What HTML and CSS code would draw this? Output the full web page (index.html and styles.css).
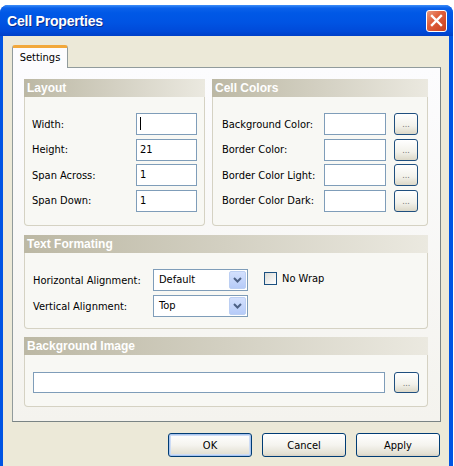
FILE: index.html
```html
<!DOCTYPE html>
<html lang="en">
<head>
  <meta charset="UTF-8" />
  <title>Cell Properties</title>
  <link rel="stylesheet" href="styles.css">
</head>
<body>

  <div class="window">
    <div class="titlebar">
      <span class="title">Cell Properties</span>
      <span class="close">
        <svg width="13" height="13" viewBox="0 0 13 13">
          <path d="M2 2 L11 11 M11 2 L2 11" stroke="#fff" stroke-width="2.4" stroke-linecap="square" fill="none"/>
        </svg>
      </span>
    </div>

    <div class="client">
      <div class="tabs">
        <div class="tab">Settings</div>
      </div>

      <div class="panel">
        <div class="top-row">

          <!-- Layout -->
          <section class="group">
            <div class="group-head">Layout</div>
            <div class="group-body layout">
              <div class="row"><span class="lbl">Width:</span><div class="field"><span class="caret"></span></div></div>
              <div class="row"><span class="lbl">Height:</span><div class="field">21</div></div>
              <div class="row"><span class="lbl">Span Across:</span><div class="field">1</div></div>
              <div class="row"><span class="lbl">Span Down:</span><div class="field">1</div></div>
            </div>
          </section>

          <!-- Cell Colors -->
          <section class="group">
            <div class="group-head">Cell Colors</div>
            <div class="group-body colors">
              <div class="row"><span class="lbl">Background Color:</span><div class="field"></div><button class="dots">...</button></div>
              <div class="row"><span class="lbl">Border Color:</span><div class="field"></div><button class="dots">...</button></div>
              <div class="row"><span class="lbl">Border Color Light:</span><div class="field"></div><button class="dots">...</button></div>
              <div class="row"><span class="lbl">Border Color Dark:</span><div class="field"></div><button class="dots">...</button></div>
            </div>
          </section>
        </div>

        <!-- Text Formating -->
        <section class="group spaced">
          <div class="group-head">Text Formating</div>
          <div class="group-body formatting">
            <div class="row">
              <span class="lbl">Horizontal Alignment:</span>
              <div class="select"><span>Default</span><span class="arrow"><svg width="9" height="6" viewBox="0 0 9 6"><path d="M1 1 L4.5 4.5 L8 1" stroke="#4d6185" stroke-width="2" fill="none"/></svg></span></div>
              <label class="check"><span class="box"></span>No Wrap</label>
            </div>
            <div class="row">
              <span class="lbl">Vertical Alignment:</span>
              <div class="select"><span>Top</span><span class="arrow"><svg width="9" height="6" viewBox="0 0 9 6"><path d="M1 1 L4.5 4.5 L8 1" stroke="#4d6185" stroke-width="2" fill="none"/></svg></span></div>
            </div>
          </div>
        </section>

        <!-- Background Image -->
        <section class="group">
          <div class="group-head">Background Image</div>
          <div class="group-body image">
            <div class="row"><div class="field wide"></div><button class="dots">...</button></div>
          </div>
        </section>
      </div>

      <div class="footer">
        <button class="btn default">OK</button>
        <button class="btn">Cancel</button>
        <button class="btn">Apply</button>
      </div>
    </div>
  </div>

</body>
</html>
```

FILE: styles.css
```css
:root {
  --face: #ece9d8;
  --blue: #0054e3;
  --field: #7f9db9;
  --text: #000;
}

body {
  margin: 0;
  background: #fff;
  font-family: "DejaVu Sans Condensed", "DejaVu Sans", sans-serif;
  font-stretch: condensed;
  font-size: 11px;
  color: var(--text);
}

.window {
  margin-top: 5px;
  width: 453px;
  height: 461px;
  background: var(--blue);
  border-radius: 8px 8px 0 0;
  overflow: hidden;
  display: flex;
  flex-direction: column;
}

/* Title bar */
.titlebar {
  height: 31px;
  flex: none;
  display: flex;
  align-items: center;
  justify-content: space-between;
  padding: 0 6px 0 7px;
  background: linear-gradient(#3d8ef8 0, #0b61ea 3px, #0058e6 8px, #0054e3 55%, #004ad9 85%, #0040c8 100%);
}

.title {
  font-family: "Liberation Sans", sans-serif;
  font-weight: bold;
  font-size: 14px;
  letter-spacing: -0.2px;
  color: #fff;
  text-shadow: 1px 1px 0 #0a2b8c;
}

.close {
  width: 21px;
  height: 22px;
  box-sizing: border-box;
  border: 1px solid #fff;
  border-radius: 3px;
  background: linear-gradient(135deg, #eb9c7f 0%, #e0603c 40%, #c8401f 100%);
  display: flex;
  align-items: center;
  justify-content: center;
}

/* Client area */
.client {
  flex: 1;
  margin: 0 4px 0 3px;
  background: var(--face);
  padding: 9px 8px 0 9px;
}

.tabs {
  display: flex;
  height: 22px;
}

.tab {
  width: 56px;
  box-sizing: border-box;
  height: 23px;
  border: 1px solid #919b9c;
  border-top: 3px solid #f2a83a;
  border-bottom: none;
  border-radius: 3px 3px 0 0;
  background: #fcfcfe;
  text-align: center;
  line-height: 19px;
  position: relative;
  z-index: 1;
}

.panel {
  height: 355px;
  box-sizing: border-box;
  border: 1px solid #919b9c;
  border-right-color: #7a8485;
  border-bottom-color: #7a8485;
  background: linear-gradient(#fcfcfe, #f4f3ee);
  padding: 11px 12px 0 11px;
}

.top-row {
  display: grid;
  grid-template-columns: 181px 216px;
  gap: 7px;
  margin-bottom: 9px;
}

.group.spaced {
  margin-bottom: 8px;
}

.group-head {
  height: 18px;
  line-height: 18px;
  padding-left: 3px;
  font-family: "Liberation Sans", sans-serif;
  font-weight: bold;
  font-size: 12px;
  color: #fff;
  background: linear-gradient(to right, #bcb8a4, #d3d0c2 50%, #ebe9e0);
}

.group-body {
  border: 1px solid #d5d2c3;
  border-top: none;
  border-radius: 0 0 4px 4px;
  background: #f8f8f4;
  display: flex;
  flex-direction: column;
}

.row {
  display: flex;
  align-items: center;
}

.field {
  height: 22px;
  box-sizing: border-box;
  border: 1px solid var(--field);
  background: #fff;
  padding-left: 3px;
  line-height: 20px;
}

.caret {
  display: inline-block;
  width: 1px;
  height: 13px;
  background: #000;
  vertical-align: middle;
  margin-top: -2px;
}

/* Layout */
.layout {
  height: 129px;
  box-sizing: border-box;
  padding: 16px 0 0 7px;
  gap: 3.5px;
}

.layout .lbl { width: 104px; }
.layout .field { width: 61px; }

/* Colors */
.colors {
  height: 129px;
  box-sizing: border-box;
  padding: 16px 0 0 9px;
  gap: 3.5px;
}

.colors .lbl { width: 102px; }
.colors .field { width: 62px; }

.dots {
  margin-left: 8px;
  width: 24px;
  height: 22px;
  padding: 0;
  border: 1px solid #1f4f7f;
  border-radius: 3px;
  background: linear-gradient(#fff, #f2f1ea 60%, #dcd8c8);
  color: #777;
  font-family: inherit;
  font-size: 9px;
  line-height: 20px;
}

/* Text formating */
.formatting {
  height: 76px;
  box-sizing: border-box;
  padding: 16px 0 0 8px;
  gap: 4px;
}

.formatting .lbl { width: 120px; }

.select {
  width: 95px;
  height: 22px;
  box-sizing: border-box;
  border: 1px solid var(--field);
  background: #fff;
  display: flex;
  justify-content: space-between;
  padding: 1px;
  line-height: 18px;
}

.select span:first-child {
  padding-left: 4px;
}

.arrow {
  width: 17px;
  box-sizing: border-box;
  border: 1px solid #bccff3;
  border-radius: 2px;
  background: linear-gradient(#d3e0fd, #b6cbf8);
  display: flex;
  align-items: center;
  justify-content: center;
}

.check {
  margin-left: 16px;
  display: flex;
  align-items: center;
  gap: 5px;
  margin-top: -3px;
}

.check .box {
  width: 13px;
  height: 13px;
  box-sizing: border-box;
  border: 1px solid #1c5180;
  background: linear-gradient(135deg, #dcdcd7, #fff);
}

/* Background image */
.image {
  height: 52px;
  box-sizing: border-box;
  padding: 17px 0 0 8px;
}

.image .field {
  width: 352px;
  height: 21px;
}

.image .dots {
  margin-left: 9px;
  width: 25px;
  height: 21px;
}

/* Buttons */
.footer {
  display: flex;
  justify-content: flex-end;
  gap: 10px;
  padding: 11px 0 0 0;
  margin-right: 1px;
}

.btn {
  width: 84px;
  height: 24px;
  border: 1px solid #003c74;
  border-radius: 3px;
  background: linear-gradient(#fff, #f5f4ef 50%, #e3e0d3 90%, #d6d0c5);
  font-family: inherit;
  font-size: 11px;
  color: #000;
  padding: 0;
}

.btn.default {
  box-shadow: inset 0 0 0 1px #a8c4ee, inset 0 0 0 2px #cddcf5;
}
```
